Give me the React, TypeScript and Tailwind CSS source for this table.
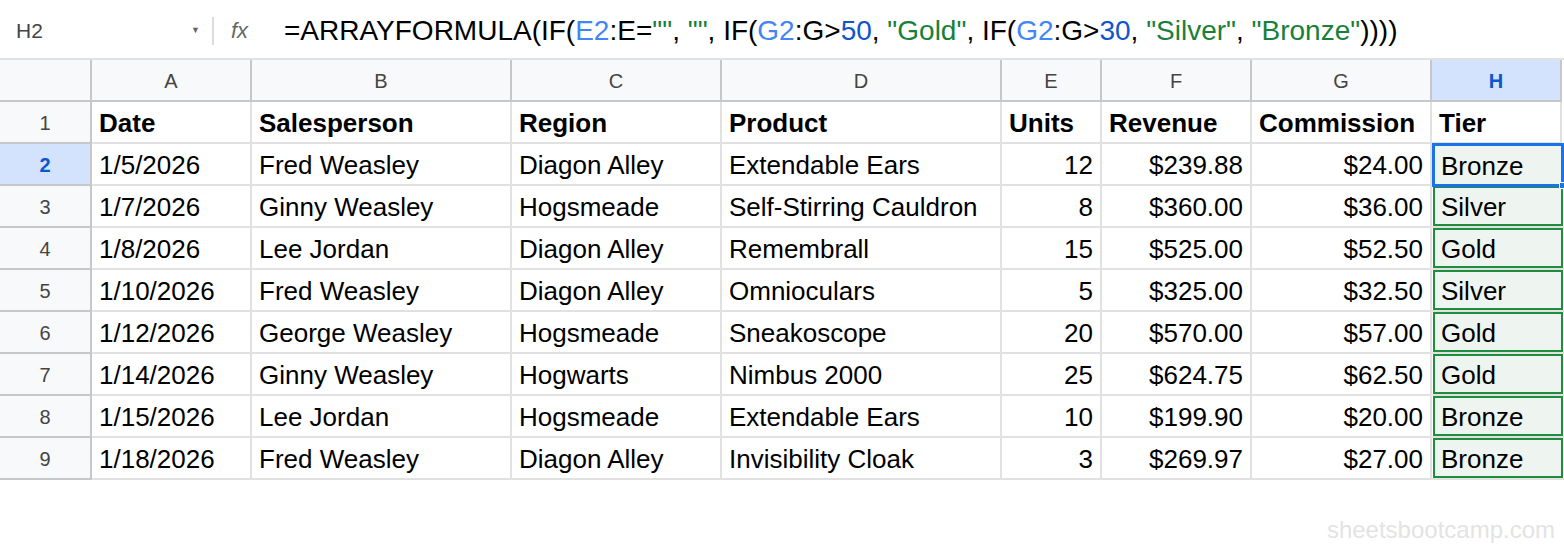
import React from 'react'

const cols = [
  { key: 'A', w: 'w-[160px]' },
  { key: 'B', w: 'w-[260px]' },
  { key: 'C', w: 'w-[210px]' },
  { key: 'D', w: 'w-[280px]' },
  { key: 'E', w: 'w-[100px]' },
  { key: 'F', w: 'w-[150px]' },
  { key: 'G', w: 'w-[180px]' },
  { key: 'H', w: 'w-[130px]' },
]

const header = ['Date', 'Salesperson', 'Region', 'Product', 'Units', 'Revenue', 'Commission', 'Tier']

const rows = [
  ['1/5/2026', 'Fred Weasley', 'Diagon Alley', 'Extendable Ears', '12', '$239.88', '$24.00', 'Bronze'],
  ['1/7/2026', 'Ginny Weasley', 'Hogsmeade', 'Self-Stirring Cauldron', '8', '$360.00', '$36.00', 'Silver'],
  ['1/8/2026', 'Lee Jordan', 'Diagon Alley', 'Remembrall', '15', '$525.00', '$52.50', 'Gold'],
  ['1/10/2026', 'Fred Weasley', 'Diagon Alley', 'Omnioculars', '5', '$325.00', '$32.50', 'Silver'],
  ['1/12/2026', 'George Weasley', 'Hogsmeade', 'Sneakoscope', '20', '$570.00', '$57.00', 'Gold'],
  ['1/14/2026', 'Ginny Weasley', 'Hogwarts', 'Nimbus 2000', '25', '$624.75', '$62.50', 'Gold'],
  ['1/15/2026', 'Lee Jordan', 'Hogsmeade', 'Extendable Ears', '10', '$199.90', '$20.00', 'Bronze'],
  ['1/18/2026', 'Fred Weasley', 'Diagon Alley', 'Invisibility Cloak', '3', '$269.97', '$27.00', 'Bronze'],
]

const rightAligned = [4, 5, 6]

function FormulaBar() {
  return (
    <div className="flex items-center h-[60px] pt-[3px] border-b-2 border-[#e1e1e1] bg-white">
      <div className="w-[212px] flex items-center justify-between pl-4 pr-3 text-[21px] text-[#444]">
        <span>H2</span>
        <span className="text-[9px] text-[#666]">▼</span>
      </div>
      <div className="w-[2px] h-7 bg-[#dadce0]" />
      <div className="w-[70px] pl-[17px] text-[22px] italic text-[#666]">fx</div>
      <div className="text-[28px] text-black whitespace-nowrap">
        =ARRAYFORMULA(IF(<span className="text-[#4285f4]">E2</span>:E=<span className="text-[#188038]">""</span>, <span className="text-[#188038]">""</span>, IF(<span className="text-[#4285f4]">G2</span>:G&gt;<span className="text-[#1155cc]">50</span>, <span className="text-[#188038]">"Gold"</span>, IF(<span className="text-[#4285f4]">G2</span>:G&gt;<span className="text-[#1155cc]">30</span>, <span className="text-[#188038]">"Silver"</span>, <span className="text-[#188038]">"Bronze"</span>))))
      </div>
    </div>
  )
}

function ColumnHeader() {
  return (
    <div className="flex h-[42px]">
      <div className="w-[92px] shrink-0 bg-[#f8f9fa] border-r-2 border-b-2 border-[#c7c7c7]" />
      {cols.map((c) => (
        <div
          key={c.key}
          className={`${c.w} shrink-0 flex items-center justify-center pt-[2px] border-r-2 border-b-2 border-[#c7c7c7] text-[20px] ${
            c.key === 'H' ? 'bg-[#d3e3fd] text-[#0b57d0] font-bold' : 'bg-[#f8f9fa] text-[#444]'
          }`}
        >
          {c.key}
        </div>
      ))}
    </div>
  )
}

function TierCell({ value, selected }: { value: string; selected: boolean }) {
  if (selected) {
    return (
      <div className="w-[132px] shrink-0 h-[42px] relative">
        <div className="absolute -top-[1px] left-0 w-[132px] h-[44px] pt-[2px] border-[3px] border-[#1a73e8] bg-[#eef5f0] flex items-center pl-[6px] text-[26px] text-black">
          {value}
        </div>
        <div className="absolute right-[-2px] bottom-[-3px] w-[7px] h-[7px] bg-[#1a73e8] border border-white rounded-[1px]" />
      </div>
    )
  }
  return (
    <div className="w-[132px] shrink-0 h-[42px] border-b-2 border-[#e1e1e1] pl-[1px] pr-[1px]">
      <div className="h-full pt-[2px] border-2 border-[#1e8e3e] bg-[#eef5f0] flex items-center pl-[6px] text-[26px] text-black">
        {value}
      </div>
    </div>
  )
}

function Row({ n, cells }: { n: number; cells: string[] }) {
  const sel = n === 2
  return (
    <div className="flex h-[42px]">
      <div
        className={`w-[92px] shrink-0 flex items-center justify-center pt-[2px] border-r-2 border-b-2 border-[#c7c7c7] text-[20px] ${
          sel ? 'bg-[#d3e3fd] text-[#0b57d0] font-bold' : 'bg-[#f8f9fa] text-[#444]'
        }`}
      >
        {n}
      </div>
      {cells.map((v, i) => {
        if (i === 7 && n > 1) return <TierCell key={i} value={v} selected={sel} />
        return (
          <div
            key={i}
            className={`${cols[i].w} shrink-0 flex items-center pt-[2px] border-r-2 border-b-2 border-[#e1e1e1] text-[26px] text-black pl-[7px] pr-[6px] whitespace-nowrap overflow-hidden ${
              n === 1 ? 'font-bold' : ''
            } ${n > 1 && rightAligned.includes(i) ? 'justify-end pr-[7px]' : ''}`}
          >
            {v}
          </div>
        )
      })}
    </div>
  )
}

export default function App() {
  return (
    <div className="w-[1564px] h-[546px] bg-white overflow-hidden font-['Liberation_Sans',Arial,sans-serif]">
      <FormulaBar />
      <ColumnHeader />
      <Row n={1} cells={header} />
      {rows.map((r, i) => (
        <Row key={i} n={i + 2} cells={r} />
      ))}
      <div className="flex justify-end pr-[9px] pt-[32px] text-[24px] text-[#e3e3e3]">sheetsbootcamp.com</div>
    </div>
  )
}
